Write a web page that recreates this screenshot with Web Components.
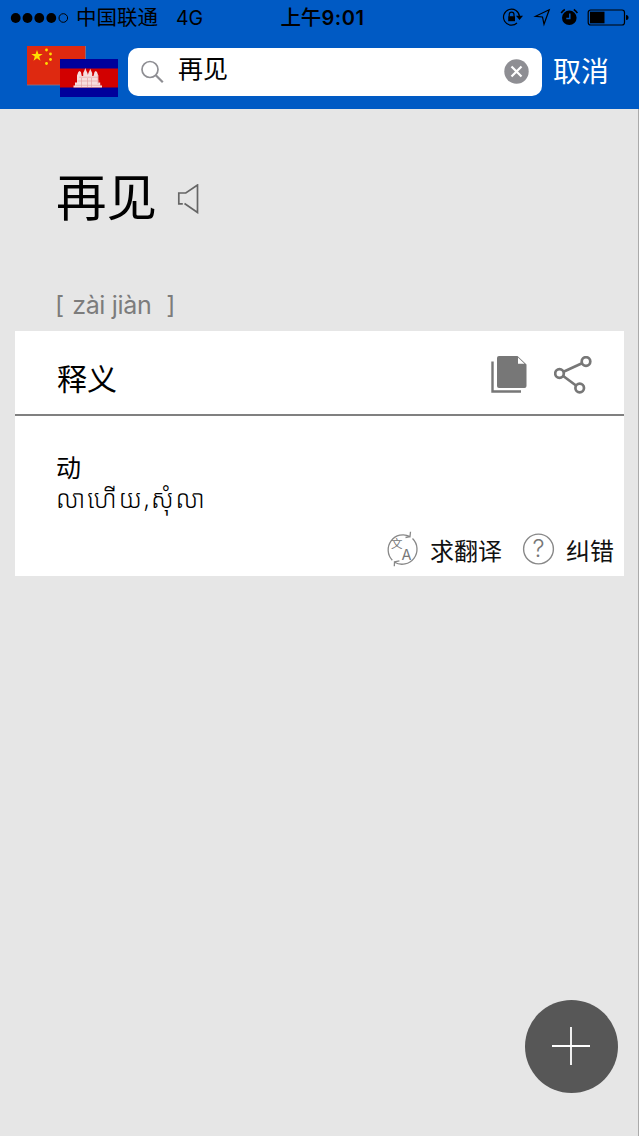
<!DOCTYPE html>
<html lang="zh-CN">
<head>
<meta charset="utf-8">
<title>再见</title>
<style>
    html, body {
        margin: 0;
        height: 100%;
        overflow: hidden;
    }
    body {
        background: #e6e6e6;
        color: #000;
        font-family: Inter, "Noto Sans CJK SC", sans-serif;
    }
</style>
</head>
<body>
<dict-app></dict-app>
<script>
class StatusBar extends HTMLElement {
    constructor() {
        super();
        this.attachShadow({mode: "open"}).innerHTML = `
            <style>
                :host {
                    display: grid;
                    grid-template-columns: 1fr auto 1fr;
                    align-items: center;
                    height: 36px;
                    padding: 0 10px 0 10px;
                    font-size: 20.5px;
                    line-height: 36px;
                }
                .left, .right { display: flex; align-items: center; }
                .right { justify-content: flex-end; }
                .dots { margin-right: 7px; }
                .net { margin-left: 18px; font-size: 19.5px; letter-spacing: -.1px; }
                .time { font-weight: 500; padding-left: 6px; }
                .time b { font-weight: 600; font-size: 20px; letter-spacing: .6px; }
                svg { display: block; flex: none; }
            </style>
            <div class="left">
                <svg class="dots" width="59" height="12" viewBox="0 0 59 12">
                    <circle cx="5.7" cy="6" r="4.9"/><circle cx="17.5" cy="6" r="4.9"/>
                    <circle cx="29.3" cy="6" r="4.9"/><circle cx="41.3" cy="6" r="4.9"/>
                    <circle cx="53.3" cy="6" r="4.3" fill="none" stroke="#000"/>
                </svg>
                <span>中国联通</span><span class="net">4G</span>
            </div>
            <div class="time">上午<b>9:01</b></div>
            <div class="right">
                <svg width="127" height="20" viewBox="0 0 127 20" fill="none" stroke="#000" stroke-width="1.2">
                    <path d="M17.500 8.500a8 8 0 1 0-2.500 6.500"/>
                    <path d="M14 7.800h7l-3.500 4.200z" fill="#000" stroke="none"/>
                    <path d="M7.200 8.500V6.500a2.400 2.400 0 0 1 4.800 0v2"/>
                    <path d="M6.200 8.200h6.800v5H6.200z" fill="#000" stroke="none"/>
                    <path d="M47.200 1.800L33.500 8.300l7 .7 1.500 7.200z"/>
                    <circle cx="67.300" cy="9.800" r="7.300" fill="#000" stroke="none"/>
                    <path d="M59.200 5a10 10 0 0 1 3.600-3.500M71.800 1.500a10 10 0 0 1 3.600 3.500" stroke-width="1.500"/>
                    <path d="M67.800 5.500v5h-3.500" stroke="#005ac4" stroke-width="1.500"/>
                    <rect x="86.200" y="2" width="36.300" height="15" rx="2.500"/>
                    <path d="M88 3.700h14.500v11.600H88z" fill="#000" stroke="none"/>
                    <path d="M124 7a2.500 2.500 0 0 1 0 5z" fill="#000" stroke="none"/>
                </svg>
            </div>`;
    }
}
customElements.define("status-bar", StatusBar);

class LanguageFlags extends HTMLElement {
    constructor() {
        super();
        this.attachShadow({mode: "open"}).innerHTML = `
            <style>
                :host { display: block; width: 91px; height: 52px; }
                svg { display: block; }
            </style>
            <svg width="91" height="52" viewBox="0 0 91 52">
                <path fill="#de2910" d="M0 0h58.500v39H0z"/>
                <path d="M0 39h33M58.500 0v13" stroke="#8b7486" stroke-width=".8"/>
                <g fill="#ffde00">
                    <path d="M10 4l1.400 4h4.300l-3.500 2.600 1.300 4.200-3.500-2.600-3.500 2.600 1.300-4.200L4.300 8h4.300z"/>
                    <circle cx="19.500" cy="4" r="1.400"/><circle cx="23.500" cy="8" r="1.400"/>
                    <circle cx="23.500" cy="13.500" r="1.400"/><circle cx="19.500" cy="17.500" r="1.400"/>
                </g>
                <path fill="#00009b" d="M33 13h58v38H33z"/>
                <path fill="#d20000" d="M33 22.500h58V41.500H33z"/>
                <!-- Angkor Wat -->
                <path fill="#f6dede" d="M46.500 41.500v-2h1.500v-3h2v-7l1.300-3.500 1.300-1 1.300 1 .9 4h1.400v-3l1.200-2.600.9-2.400.9 2.400 1.200 2.600.5 2 .5-2 1.200-2.600.6-1.600.8 1.600 1.200 2.600v3h1.300l1-4 1.200-1 1.300 1 1.200 3.500v7h2v3h1.800v2z"/>
                <path d="M48.500 39.300h26M50.500 35h22M52 31.200h19M54.500 32v9M60.500 32v9M64.500 32v9M71 29v9" stroke="#e09a9a" stroke-width=".6" fill="none"/>
            </svg>`;
    }
}
customElements.define("language-flags", LanguageFlags);

class SearchField extends HTMLElement {
    constructor() {
        super();
        this.attachShadow({mode: "open"}).innerHTML = `
            <style>
                :host {
                    display: flex;
                    align-items: center;
                    box-sizing: border-box;
                    height: 48px;
                    padding: 0 13px;
                    border-radius: 10px;
                    background: #fff;
                    font-size: 25px;
                }
                .value { flex: 1; margin-left: 14px; line-height: 36px; padding-bottom: 6px; }
                svg { display: block; flex: none; }
            </style>
            <svg width="23" height="24" viewBox="0 0 23 24" fill="none" stroke="#8e8e93" stroke-width="1.700">
                <circle cx="9" cy="9.500" r="8"/><path d="M14.800 15.300l7 7" stroke-width="2.200"/>
            </svg>
            <span class="value"><slot></slot></span>
            <svg width="25" height="25" viewBox="0 0 25 25">
                <circle cx="12.500" cy="12.500" r="12.200" fill="#8e8e93"/>
                <path d="M7.500 7.500l10 10M17.500 7.500l-10 10" stroke="#fff" stroke-width="2.200"/>
            </svg>`;
    }
}
customElements.define("search-field", SearchField);

class WordHeading extends HTMLElement {
    constructor() {
        super();
        this.attachShadow({mode: "open"}).innerHTML = `
            <style>
                :host { display: block; padding: 57px 56px 0; }
                .word { display: flex; align-items: center; height: 64px; font-size: 50.500px; line-height: 64px; }
                .word svg { margin: 2px 0 0 20px; }
                .pinyin {
                    display: flex;
                    margin: 58px 0 0 -1px;
                    height: 34px;
                    line-height: 34px;
                    font-size: 25px;
                    color: #7c7c7c;
                    white-space: pre;
                }
                .sound { width: 94px; padding-left: 8px; letter-spacing: -.3px; }
            </style>
            <div class="word">
                <slot></slot>
                <svg width="22" height="30" viewBox="0 0 22 30" fill="none" stroke="#666" stroke-width="1.700">
                    <path d="M5.800 19.800H1.800V9h7L20.500 1v27.500L7.500 19.500"/>
                </svg>
            </div>
            <div class="pinyin"><span>[</span><span class="sound"><slot name="pinyin"></slot></span><span>]</span></div>`;
    }
}
customElements.define("word-heading", WordHeading);

class ActionLink extends HTMLElement {
    constructor() {
        super();
        this.attachShadow({mode: "open"}).innerHTML = `
            <style>
                :host { display: flex; align-items: center; font-size: 24px; line-height: 34px; color: #111; }
                .label { margin-left: 11px; padding-top: 7px; }
            </style>
            <slot name="icon"></slot>
            <span class="label"><slot></slot></span>`;
    }
}
customElements.define("action-link", ActionLink);

class DefinitionCard extends HTMLElement {
    constructor() {
        super();
        this.attachShadow({mode: "open"}).innerHTML = `
            <style>
                :host {
                    display: flex;
                    flex-direction: column;
                    box-sizing: border-box;
                    height: 245px;
                    margin: 9px 15px 0;
                    background: #fff;
                }
                header {
                    display: flex;
                    align-items: center;
                    box-sizing: border-box;
                    height: 85px;
                    padding: 4px 32px 0 42px;
                    border-bottom: 2px solid #808080;
                }
                h2 { flex: 1; margin: 0; padding-top: 8px; font-size: 30px; line-height: 40px; font-weight: 400; }
                header svg + svg { margin-left: 27px; }
                .body { flex: 1; padding: 36px 41px 0; font-size: 25px; line-height: 32px; }
                footer { display: flex; justify-content: flex-end; gap: 20px; height: 55px; padding-right: 10px; }
                svg { display: block; flex: none; }
            </style>
            <header>
                <h2>释义</h2>
                <svg width="36" height="38" viewBox="0 0 36 38">
                    <path fill="#777" d="M8 0h18.500L35.500 8.500V30q0 2-2 2H8q-2 0-2-2V2q0-2 2-2z"/>
                    <path fill="#fff" d="M27 1.500v6.200h6.500z"/>
                    <path d="M1.500 5.500v30h28.500" fill="none" stroke="#777" stroke-width="2.400"/>
                </svg>
                <svg width="38" height="38" viewBox="0 0 38 38" fill="none" stroke="#777" stroke-width="2.700">
                    <circle cx="5.500" cy="17.500" r="4.300"/><circle cx="32" cy="5.500" r="4.300"/><circle cx="25.700" cy="32" r="4.300"/>
                    <path d="M9.500 15.700L28 7.300M9.200 20L22 29.500"/>
                </svg>
            </header>
            <div class="body"><slot></slot></div>
            <footer>
                <action-link>
                    <svg slot="icon" width="33" height="36" viewBox="0 0 33 36" fill="none" stroke="#888" stroke-width="1.300">
                        <path d="M6.300 29.200A15 15 0 0 1 24 5.500L24.500.8M26.500 7.500A15 15 0 0 1 8.500 31.200L8.300 35.300M8.400 30.800l5-1M24 5.500l-4.500 1"/>
                        <g fill="#777" stroke="none">
                            <text x="5" y="17.300" font-family="Noto Sans CJK SC" font-size="11.500">文</text>
                            <text x="15.500" y="28.800" font-family="Inter" font-size="14.500">A</text>
                        </g>
                    </svg>求翻译</action-link>
                <action-link>
                    <svg slot="icon" width="33" height="34" viewBox="0 0 33 34">
                        <circle cx="16.500" cy="17" r="14.900" fill="none" stroke="#888" stroke-width="1.400"/>
                        <text x="16.500" y="25.300" text-anchor="middle" fill="#777" font-family="Inter" font-size="24" font-weight="300">?</text>
                    </svg>纠错</action-link>
            </footer>`;
    }
}
customElements.define("definition-card", DefinitionCard);

class AddButton extends HTMLElement {
    constructor() {
        super();
        this.attachShadow({mode: "open"}).innerHTML = `
            <style>
                :host {
                    position: absolute;
                    right: 20px;
                    bottom: 43px;
                    display: block;
                    width: 93px;
                    height: 93px;
                    border-radius: 50%;
                    background: #575757;
                }
                svg { display: block; }
            </style>
            <svg width="93" height="93" viewBox="0 0 93 93" stroke="#fff" stroke-width="1.800">
                <path d="M27 46h38M46 27v38"/>
            </svg>`;
    }
}
customElements.define("add-button", AddButton);

class DictApp extends HTMLElement {
    constructor() {
        super();
        this.attachShadow({mode: "open"}).innerHTML = `
            <style>
                :host {
                    display: block;
                    position: relative;
                    box-sizing: border-box;
                    height: 100vh;
                    border-right: 1px solid #aaa;
                }
                .top { height: 109px; margin-right: -1px; background: #005ac4; }
                .bar { display: flex; align-items: center; height: 71px; padding-left: 27px; }
                search-field { width: 414px; margin-left: 10px; }
                .cancel { margin-left: 11px; padding-top: 1px; color: #fff; font-size: 28px; line-height: 40px; }
                definition-card { margin-right: 14px; }
                p { margin: 0; }
                .khmer {
                    font-family: "Noto Sans Khmer", "Khmer OS", "DejaVu Sans", sans-serif;
                    font-size: 25px;
                    font-weight: 300;
                    letter-spacing: 1.9px;
                    line-height: 28px;
                    white-space: nowrap;
                }
            </style>
            <div class="top">
                <status-bar></status-bar>
                <div class="bar">
                    <language-flags></language-flags>
                    <search-field>再见</search-field>
                    <span class="cancel">取消</span>
                </div>
            </div>
            <word-heading>再见<span slot="pinyin">zài jiàn</span></word-heading>
            <definition-card>
                <p>动</p>
                <p class="khmer">លាហើយ,សុំលា</p>
            </definition-card>
            <add-button></add-button>`;
    }
}
customElements.define("dict-app", DictApp);
</script>
</body>
</html>
